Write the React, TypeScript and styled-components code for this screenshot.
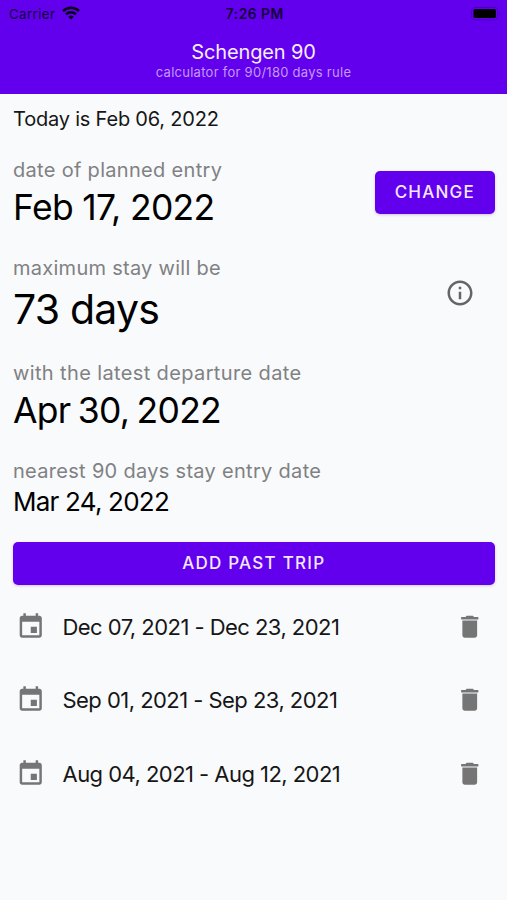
import React from "react";
import styled, { createGlobalStyle } from "styled-components";

const GlobalStyle = createGlobalStyle`
  * { box-sizing: border-box; }
  body {
    margin: 0;
    background: #f9fafc;
    font-family: Inter, "Liberation Sans", sans-serif;
    font-feature-settings: "calt" 0;
  }
`;

const Screen = styled.main`
  display: flex;
  flex-direction: column;
  min-height: 900px;
  background: #f9fafc;
  color: #000;
`;

const Header = styled.header`
  height: 93.5px;
  background: #6200ee;
`;

const StatusBar = styled.div`
  display: grid;
  grid-template-columns: 1fr auto 1fr;
  align-items: center;
  height: 28px;
  padding: 0 6.5px 0 9px;
  color: #14003a;
`;

const Carrier = styled.div`
  display: flex;
  align-items: center;
  gap: 6.5px;
`;

const WifiIcon = styled.svg`
  display: block;
  margin-bottom: 2px;
`;

const Battery = styled.svg`
  justify-self: end;
  display: block;
`;

const Titles = styled.div`
  display: flex;
  flex-direction: column;
  align-items: center;
  padding-top: 11px;
`;

const Text = styled.div<{
  $size: number;
  $line: number;
  $track?: number;
  $word?: number;
  $color?: string;
  $weight?: number;
}>`
  font-size: ${(p) => p.$size}px;
  line-height: ${(p) => p.$line}px;
  letter-spacing: ${(p) => p.$track ?? 0}px;
  word-spacing: ${(p) => p.$word ?? 0}px;
  color: ${(p) => p.$color ?? "inherit"};
  font-weight: ${(p) => p.$weight ?? 400};
  white-space: nowrap;
`;

const Content = styled.div`
  padding: 0 12.5px 0 13px;
`;

const Today = styled.div`
  margin-bottom: 13.5px;
`;

const Section = styled.section`
  display: flex;
  justify-content: space-between;
  margin-bottom: 22px;
`;

const Button = styled.button<{ $wide?: boolean; $track: number }>`
  display: flex;
  align-items: center;
  justify-content: center;
  width: ${(p) => (p.$wide ? "100%" : "119.5px")};
  height: 43px;
  margin-top: ${(p) => (p.$wide ? "-0.5px" : "12.5px")};
  padding: 0;
  border: 0;
  border-radius: 5px;
  background: #6200ee;
  color: #f4e8ff;
  box-shadow: 0 1px 3px rgba(60, 20, 120, 0.22);
  font: 500 17px Inter, sans-serif;
  letter-spacing: ${(p) => p.$track}px;
`;

const InfoIcon = styled.svg`
  flex: none;
  width: 30px;
  height: 30px;
  margin: 22px 20px 0 0;
  fill: #646566;
`;

const Trips = styled.ul`
  margin: 5.8px 0 0;
  padding: 0;
  list-style: none;
`;

const Trip = styled.li`
  display: grid;
  grid-template-columns: 46.5px 1fr 29px;
  align-items: center;
  height: 73.4px;
  padding: 0 10.5px 0 3px;
`;

const TripIcon = styled.svg`
  display: block;
  width: 29.5px;
  height: 29.5px;
  margin-bottom: 1px;
  fill: #757575;
`;

const trips = [
  "Dec 07, 2021 - Dec 23, 2021",
  "Sep 01, 2021 - Sep 23, 2021",
  "Aug 04, 2021 - Aug 12, 2021",
];

const GREY = "#808183";

export default function App() {
  return (
    <Screen>
      <GlobalStyle />
      <Header>
        <StatusBar>
          <Carrier>
            <Text $size={13.3} $line={28} $track={0.4}>Carrier</Text>
            <WifiIcon width="18" height="14" viewBox="0 0 18 14" fill="none" stroke="#090018" strokeWidth="2.6">
              <path d="M1 5.1a11.4 11.4 0 0 1 16 0" />
              <path d="M4 8.3a7.1 7.1 0 0 1 10 0" />
              <path d="M9 13.4 6.3 10.8a3.9 3.9 0 0 1 5.4 0Z" fill="#090018" stroke="none" />
            </WifiIcon>
          </Carrier>
          <Text $size={13.8} $line={28} $weight={600} $track={0.5}>7:26 PM</Text>
          <Battery width="30" height="14" viewBox="0 0 30 14">
            <rect x="0.7" y="0.5" width="26" height="12.4" rx="3" fill="none" stroke="#4c00bc" />
            <rect x="2.5" y="2" width="22.4" height="9" rx="1.5" fill="#000" />
            <path d="M28 4.7c1.6.7 1.6 3.1 0 3.8Z" fill="#4c00bc" />
          </Battery>
        </StatusBar>
        <Titles>
          <Text $size={20} $line={26} $track={-0.13} $color="#f7edff">Schengen 90</Text>
          <Text $size={13} $line={15} $track={0.27} $color="#c39af8">calculator for 90/180 days rule</Text>
        </Titles>
      </Header>
      <Content>
        <Today>
          <Text $size={20} $line={51} $track={-0.2} $color="#161617">Today is Feb 06, 2022</Text>
        </Today>
        <Section>
          <div>
            <Text $size={20} $line={24} $track={0.31} $color={GREY}>date of planned entry</Text>
            <Text $size={35.5} $line={52} $track={-0.67}>Feb 17, 2022</Text>
          </div>
          <Button $track={1.2}>CHANGE</Button>
        </Section>
        <Section>
          <div>
            <Text $size={20} $line={24} $track={0.27} $color={GREY}>maximum stay will be</Text>
            <Text $size={41} $line={59} $track={-0.8}>73 days</Text>
          </div>
          <InfoIcon viewBox="0 0 24 24">
            <path d="M11 7h2v2h-2zm0 4h2v6h-2zm1-9C6.48 2 2 6.48 2 12s4.48 10 10 10 10-4.48 10-10S17.52 2 12 2zm0 18c-4.41 0-8-3.59-8-8s3.59-8 8-8 8 3.59 8 8-3.59 8-8 8z" />
          </InfoIcon>
        </Section>
        <Section>
          <div>
            <Text $size={20} $line={24} $track={0.37} $color={GREY}>with the latest departure date</Text>
            <Text $size={35.5} $line={52} $track={-0.75} $word={-1.8}>Apr 30, 2022</Text>
          </div>
        </Section>
        <Section>
          <div>
            <Text $size={20} $line={24} $track={0.3} $color={GREY}>nearest 90 days stay entry date</Text>
            <Text $size={26} $line={37} $track={-0.78}>Mar 24, 2022</Text>
          </div>
        </Section>
        <Button $wide $track={1.25}>ADD PAST TRIP</Button>
        <Trips>
          {trips.map((dates) => (
            <Trip key={dates}>
              <TripIcon viewBox="0 0 24 24">
                <path d="M17 12h-5v5h5v-5zM16 1v2H8V1H6v2H5c-1.11 0-1.99.9-1.99 2L3 19c0 1.1.89 2 2 2h14c1.1 0 2-.9 2-2V5c0-1.1-.9-2-2-2h-1V1h-2zm3 18H5V8h14v11z" />
              </TripIcon>
              <Text $size={22} $line={30} $track={-0.54} $color="#161617">{dates}</Text>
              <TripIcon viewBox="0 0 24 24">
                <path d="M6 19c0 1.1.9 2 2 2h8c1.1 0 2-.9 2-2V7H6v12zM19 4h-3.5l-1-1h-5l-1 1H5v2h14V4z" />
              </TripIcon>
            </Trip>
          ))}
        </Trips>
      </Content>
    </Screen>
  );
}
